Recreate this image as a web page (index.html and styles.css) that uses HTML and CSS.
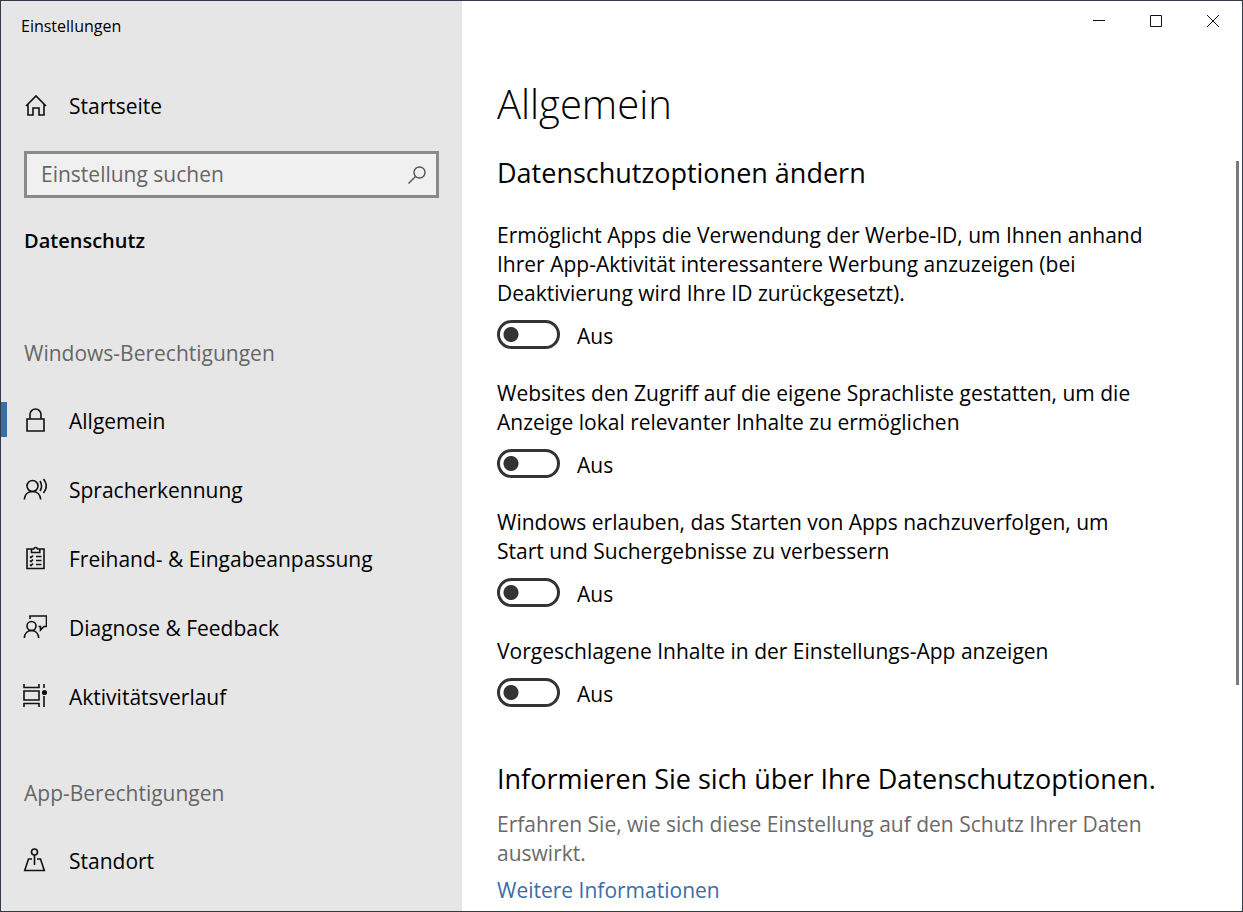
FILE: index.html
```html
<!DOCTYPE html>
<html lang="de">
<head>
    <meta charset="UTF-8" />
    <meta name="viewport" content="width=device-width, initial-scale=1.0" />
    <title>Einstellungen</title>
    <link rel="stylesheet" href="styles.css">
</head>
<body>
    <div class="window">
        <aside class="sidebar">
            <div class="app-title">Einstellungen</div>
            <a class="nav-item" href="#start">
                <svg class="icon" viewBox="0 0 24 24"><path d="M3 13 13 3l10 10M5 11v11h5v-7h6v7h5V11" /></svg>
                <span>Startseite</span>
            </a>
            <form class="search">
                <input type="text" id="searchInput" placeholder="Einstellung suchen" aria-label="Einstellung suchen" />
                <button type="submit" aria-label="Suchen">
                    <svg viewBox="0 0 20 20"><circle cx="12.5" cy="7.5" r="5.5" /><path d="M8.5 11.5 1.5 18.5" /></svg>
                </button>
            </form>
            <h2 class="category">Datenschutz</h2>

            <nav>
                <h3 class="group-label">Windows-Berechtigungen</h3>
                <a class="nav-item active" href="#allgemein">
                    <svg class="icon" viewBox="0 0 24 24"><path d="M4 11h17v12H4zM7 11V6.500a5.500 5.500 0 0 1 11 0V11" /></svg>
                    <span>Allgemein</span>
                </a>
                <a class="nav-item" href="#sprache">
                    <svg class="icon" viewBox="0 0 24 24"><circle cx="9.500" cy="9" r="5.500" /><path d="M1.300 22.500C1.700 17.500 5 14.500 9.500 14.500s7.800 3 8.200 8M17 4c2 3.500 2 7 0 10M20.500 2c3.600 4.500 3.600 9.500 0 14" /></svg>
                    <span>Spracherkennung</span>
                </a>
                <a class="nav-item" href="#freihand">
                    <svg class="icon" viewBox="0 0 24 24"><path d="M9 3H4v19.500h17V3h-5M8.500 6.500V3h2.200a2 2 0 0 1 3.900 0h2.200v3.500zM7 10.500l1 1 2-2M7 14.500l1 1 2-2M7 18.500l1 1 2-2M13 10.500h5.500M13 14.500h5.500M13 18.500h5.500" /></svg>
                    <span>Freihand- &amp; Eingabeanpassung</span>
                </a>
                <a class="nav-item" href="#diagnose">
                    <svg class="icon" viewBox="0 0 24 24"><circle cx="8.500" cy="11" r="4.500" /><path d="M1.300 23c.3-4.500 3.200-7.500 7.200-7.500s6.900 3 7.200 7.500M7 4V1h16.500v10.500H21L17.500 15v-3.500h-2" /></svg>
                    <span>Diagnose &amp; Feedback</span>
                </a>
                <a class="nav-item" href="#verlauf">
                    <svg class="icon" viewBox="0 0 24 24"><path d="M1 0v3.500h15V0M1 7h15v9H1zM1 23v-3.500h15V23M21 0v4M21 12v11" /><circle class="dot" cx="21.500" cy="8.500" r="1.800" /></svg>
                    <span>Aktivitätsverlauf</span>
                </a>

                <h3 class="group-label">App-Berechtigungen</h3>
                <a class="nav-item" href="#standort">
                    <svg class="icon" viewBox="0 0 24 24"><circle cx="11.500" cy="4" r="3" /><path d="M11.500 7v10M9 11H5.500L1.700 22.500h19.600L17.500 11H14" /></svg>
                    <span>Standort</span>
                </a>
            </nav>
        </aside>

        <main class="main">
            <div class="window-buttons">
                <button aria-label="Minimieren"><svg viewBox="0 0 12 12"><path d="M0 5.500h12" /></svg></button>
                <button aria-label="Maximieren"><svg viewBox="0 0 12 12"><path d="M.5.500h11v11H.5z" /></svg></button>
                <button aria-label="Schließen"><svg viewBox="0 0 12 12"><path d="M0 0l12 12M12 0 0 12" /></svg></button>
            </div>
            <h1>Allgemein</h1>
            <div class="content">
                <section>
                    <h2>Datenschutzoptionen ändern</h2>
                    <div class="option">
                        <p id="adText">Ermöglicht Apps die Verwendung der Werbe-ID, um Ihnen anhand Ihrer App-Aktivität interessantere Werbung anzuzeigen (bei Deaktivierung wird Ihre ID zurückgesetzt).</p>
                        <label><input type="checkbox" role="switch" aria-describedby="adText" /><span>Aus</span></label>
                    </div>
                    <div class="option">
                        <p id="langText">Websites den Zugriff auf die eigene Sprachliste gestatten, um die Anzeige lokal relevanter Inhalte zu ermöglichen</p>
                        <label><input type="checkbox" role="switch" aria-describedby="langText" /><span>Aus</span></label>
                    </div>
                    <div class="option">
                        <p id="trackText">Windows erlauben, das Starten von Apps nachzuverfolgen, um Start und Suchergebnisse zu verbessern</p>
                        <label><input type="checkbox" role="switch" aria-describedby="trackText" /><span>Aus</span></label>
                    </div>
                    <div class="option">
                        <p id="suggestText">Vorgeschlagene Inhalte in der Einstellungs-App anzeigen</p>
                        <label><input type="checkbox" role="switch" aria-describedby="suggestText" /><span>Aus</span></label>
                    </div>
                </section>
                <section class="info">
                    <h2>Informieren Sie sich über Ihre Datenschutzoptionen.</h2>
                    <p>Erfahren Sie, wie sich diese Einstellung auf den Schutz Ihrer Daten auswirkt.</p>
                    <a href="#info">Weitere Informationen</a>
                    <a href="#dashboard">Datenschutz-Dashboard</a>
                </section>
            </div>
            <div class="scroll-thumb"></div>
        </main>
    </div>
    <script>
        document.querySelectorAll('.option input').forEach(input => {
            input.addEventListener('change', () => {
                input.nextElementSibling.textContent = input.checked ? 'Ein' : 'Aus';
            });
        });
    </script>
</body>
</html>
```
FILE: styles.css
```css
* {
    box-sizing: border-box;
}

body {
    margin: 0;
    font-family: "Open Sans", "Noto Sans", sans-serif;
    font-size: 21px;
    line-height: 29px;
    color: #000;
}

h1,
h2,
h3,
p {
    margin: 0;
}

a {
    text-decoration: none;
}

button {
    border: none;
    background: none;
    padding: 0;
}

svg {
    fill: none;
    stroke: #111;
}

.window {
    display: flex;
    height: 100vh;
    border: 1px solid #303b49;
    background: #fff;
    overflow: hidden;
}

/* Sidebar */
.sidebar {
    flex: 0 0 461px;
    background: #e6e6e6;
    overflow: hidden;
}

.app-title {
    height: 71px;
    padding: 13px 20px;
    font-size: 16px;
    line-height: 24px;
}

.nav-item {
    display: flex;
    align-items: center;
    gap: 22px;
    height: 69px;
    padding-left: 22px;
    color: #000;
}

.nav-item.active {
    background: linear-gradient(#3a6ea5, #3a6ea5) 0 15px / 6px 35px no-repeat;
}

.icon {
    width: 24px;
    height: 24px;
    margin-bottom: 3px;
    stroke-width: 1.6;
}

.icon .dot {
    fill: #111;
}

.search {
    display: flex;
    height: 47px;
    margin: 10px 23px 28px;
    border: 3px solid #8a8a8a;
    background: #f0f0f0;
}

.search input {
    flex: 1;
    min-width: 0;
    padding: 0 0 0 14px;
    border: none;
    outline: none;
    background: none;
    font: inherit;
}

.search input::placeholder {
    color: #666;
    opacity: 1;
}

.search button {
    width: 38px;
}

.search svg {
    display: block;
    width: 20px;
    height: 20px;
    margin: auto;
    stroke: #555;
    stroke-width: 1.4;
}

.category {
    padding-left: 23px;
    font-size: 20px;
    font-weight: 600;
    line-height: 30px;
}

.group-label {
    margin: 46px 0 19px;
    padding-left: 23px;
    color: #666;
    font-size: 21px;
    font-weight: 400;
    line-height: 30px;
}

.category + nav .group-label:first-child {
    margin-top: 82px;
}

/* Main area */
.main {
    position: relative;
    flex: 1;
    min-width: 0;
    display: flex;
    flex-direction: column;
}

.window-buttons {
    display: flex;
    justify-content: flex-end;
    height: 40px;
    padding-right: 1px;
}

.window-buttons button {
    width: 57px;
    padding-top: 2px;
}

.window-buttons svg {
    width: 12px;
    height: 12px;
    overflow: visible;
}

h1 {
    padding: 37px 35px 24px;
    font-size: 40px;
    font-weight: 300;
    line-height: 52px;
}

.content {
    flex: 1;
    min-height: 0;
    padding: 0 64px 0 35px;
    overflow: hidden;
}

.content h2 {
    margin-bottom: 12px;
    font-size: 27px;
    font-weight: 400;
    line-height: 38px;
}

.content section:first-child h2 {
    margin-bottom: 29px;
}

.option {
    max-width: 650px;
    margin-bottom: 29px;
}

.option label {
    display: flex;
    gap: 17px;
    height: 30px;
    margin-top: 12px;
}

.option label span {
    padding-top: 2px;
}

/* Toggle switch */
.option input {
    appearance: none;
    width: 63px;
    height: 29px;
    margin: 0;
    border: 3px solid #333;
    border-radius: 15px;
    background: radial-gradient(circle at 11px center, #333 7px, transparent 8px);
}

.option input:checked {
    border-color: #3a6ea5;
    background: radial-gradient(circle at 46px center, #fff 7px, #3a6ea5 8px);
}

.info {
    padding-top: 23px;
}

.info p {
    max-width: 650px;
    margin-bottom: 8px;
    color: #6a6a6a;
}

.info a {
    display: block;
    color: #3a6ea5;
}

.scroll-thumb {
    position: absolute;
    top: 160px;
    right: 3px;
    bottom: 226px;
    width: 3px;
    background: #7a7a7a;
}
```
